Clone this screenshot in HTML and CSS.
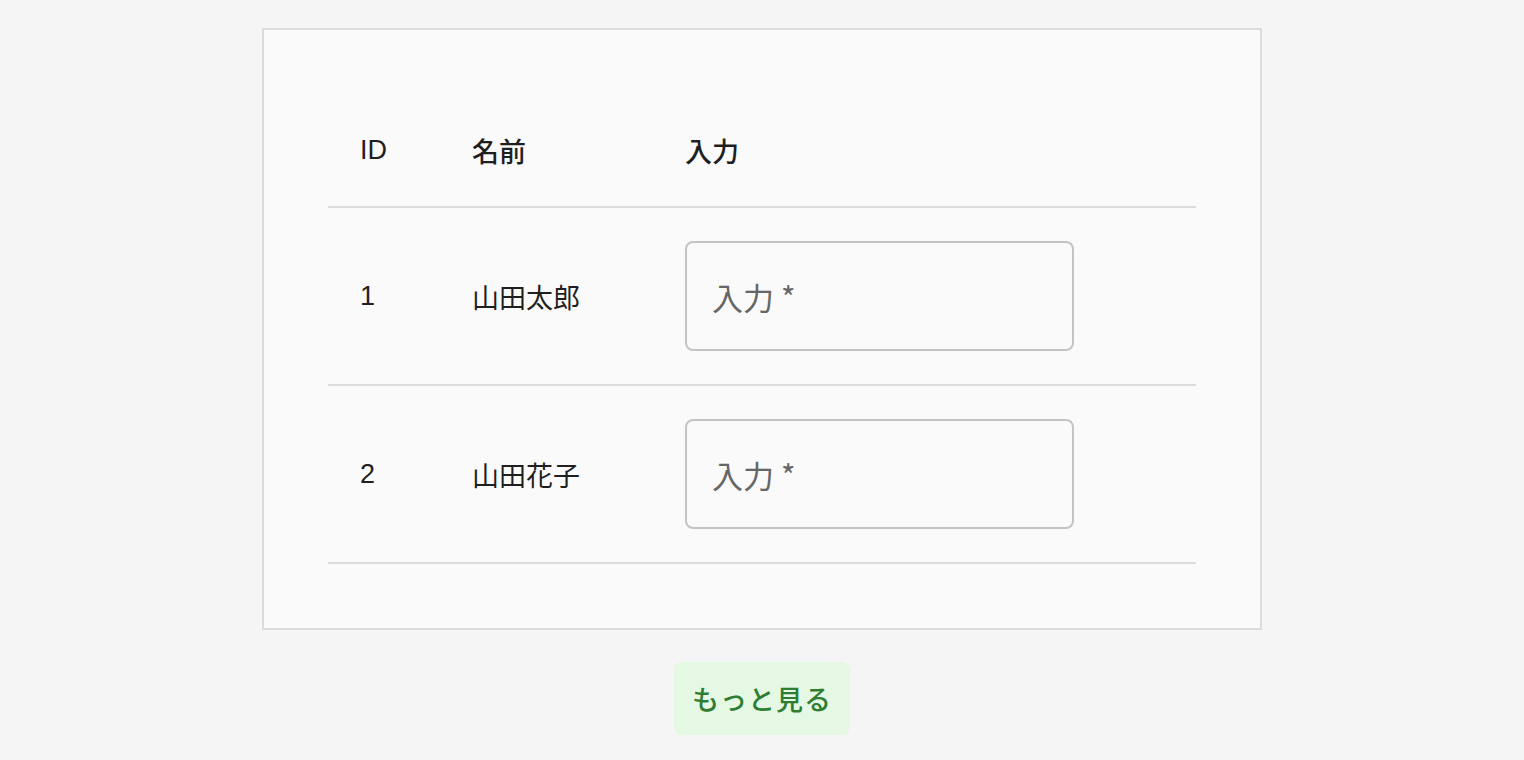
FILE: index.html
```html
<!DOCTYPE html>
<html lang="ja">
<head>
<meta charset="utf-8">
<link rel="stylesheet" href="styles.css">
</head>
<body>
<main class="page">
  <section class="card">
    <table class="grid">
      <colgroup>
        <col class="c-id">
        <col class="c-name">
        <col class="c-input">
      </colgroup>
      <thead>
        <tr><th>ID</th><th>名前</th><th>入力</th></tr>
      </thead>
      <tbody>
        <tr>
          <td>1</td><td>山田太郎</td>
          <td><input class="field" type="text" placeholder="入力 *"></td>
        </tr>
        <tr>
          <td>2</td><td>山田花子</td>
          <td><input class="field" type="text" placeholder="入力 *"></td>
        </tr>
      </tbody>
    </table>
  </section>
  <button class="more" type="button">もっと見る</button>
</main>
</body>
</html>
```
FILE: styles.css
```css
* { box-sizing: border-box; }
html, body { margin: 0; padding: 0; }
body {
  background: #f5f5f5;
  font-family: "Liberation Sans", "Noto Sans CJK JP", sans-serif;
  color: #1f1f1f;
}
.page {
  display: flex;
  flex-direction: column;
  align-items: center;
  padding-top: 28px;
}
.card {
  width: 1000px;
  background: #fafafa;
  border: 2px solid #dcdcdc;
  padding: 64px;
}
.grid {
  width: 100%;
  border-collapse: collapse;
  font-size: 27px;
}
.c-id { width: 112px; }
.c-name { width: 213px; }
.grid th {
  text-align: left;
  font-weight: 500;
  height: 113px;
  padding: 0 32px;
  border-bottom: 2px solid #dcdcdc;
  vertical-align: middle;
}
.grid td {
  padding: 33px 32px;
  border-bottom: 2px solid #dcdcdc;
  vertical-align: middle;
}
.field {
  display: block;
  width: 389px;
  height: 110px;
  border: 2px solid #c4c4c4;
  border-radius: 8px;
  background: #fafafa;
  padding: 0 25px;
  font-family: "Noto Sans CJK JP", sans-serif;
  font-size: 31px;
  color: #222;
  outline: none;
}
.field::placeholder { color: #666; }
.more {
  margin-top: 32px;
  width: 176px;
  height: 73px;
  border: none;
  border-radius: 8px;
  background: #e4f8e4;
  color: #2e7d32;
  font-family: "Noto Sans CJK JP", sans-serif;
  font-size: 27px;
  font-weight: 500;
  letter-spacing: 1px;
  cursor: pointer;
}
```
